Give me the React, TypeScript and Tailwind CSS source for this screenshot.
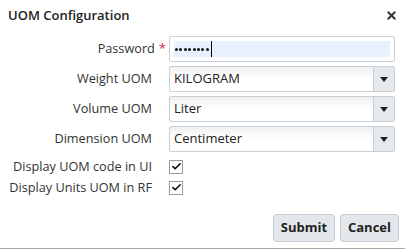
import { Check, X } from 'lucide-react';

const font = { fontFamily: '"Open Sans", "Noto Sans", sans-serif' };

function SelectBox({ value }: { value: string }) {
  return (
    <div className="h-[26px] w-[226px] flex border border-[#c8d0d7] rounded-[2px] bg-gradient-to-b from-[#f0f0f0] via-white to-white">
      <div className="flex-1 flex items-center pl-[4px] text-[13px] text-[#222]">{value}</div>
      <div className="w-[21px] flex items-center justify-center border-l border-[#c8d0d7] bg-[#e5e9ec]">
        <svg width="8" height="5" viewBox="0 0 8 5">
          <path d="M0 0 L8 0 L4 5 Z" fill="#222" />
        </svg>
      </div>
    </div>
  );
}

function CheckBox() {
  return (
    <div className="w-[14px] h-[14px] border border-[#9a9a9a] bg-white flex items-center justify-center">
      <Check size={11} strokeWidth={3.2} className="text-black" />
    </div>
  );
}

export default function App() {
  const dots = [0, 1, 2, 3, 4, 5, 6, 7];
  return (
    <div style={font} className="w-[405px] h-[249px] bg-white border-b border-[#a8a8a8] text-[#333] flex flex-col">
      <div className="h-[30px] flex items-center justify-between pl-[8px] pr-[7px]">
        <h1 className="text-[13px] font-semibold text-[#222] pt-[1px]">UOM Configuration</h1>
        <X size={13} strokeWidth={3.5} className="text-[#333]" />
      </div>

      <div className="grid grid-cols-[169px_226px] gap-y-[4px] mt-[6px] text-[12.7px]">
        <div className="flex items-center justify-end pr-[3px]">
          <span>Password</span>
          <span className="text-[#e0245e] ml-[4px] text-[13px]">*</span>
        </div>
        <div className="h-[26px] border border-[#c8d0d7] rounded-[2px] bg-white p-[4px]">
          <div className="h-full bg-[#e8f0fe] flex items-center pl-[1px] gap-[1.4px]">
            {dots.map((d) => (
              <span key={d} className="w-[3px] h-[3px] rounded-full bg-[#111]" />
            ))}
            <span className="w-[1px] h-[16px] bg-black ml-[1px]" />
          </div>
        </div>

        <div className="flex items-center justify-end pr-[17px]">Weight UOM</div>
        <SelectBox value="KILOGRAM" />

        <div className="flex items-center justify-end pr-[17px]">Volume UOM</div>
        <SelectBox value="Liter" />

        <div className="flex items-center justify-end pr-[17px]">Dimension UOM</div>
        <SelectBox value="Centimeter" />
      </div>

      <div className="grid grid-cols-[169px_226px] mt-[4px] text-[12.7px]">
        <div className="h-[21px] flex items-center justify-end pr-[17px]">Display UOM code in UI</div>
        <div className="flex items-center"><CheckBox /></div>
        <div className="h-[21px] flex items-center justify-end pr-[17px]">Display Units UOM in RF</div>
        <div className="flex items-center"><CheckBox /></div>
      </div>

      <div className="flex justify-end gap-[5px] pr-[6px] mt-[16px]">
        <button className="h-[28px] w-[62px] rounded-[3px] border border-[#c4ced7] bg-[#e4e8ec] text-[13px] font-bold text-[#222]">Submit</button>
        <button className="h-[28px] w-[59px] rounded-[3px] border border-[#c4ced7] bg-[#e4e8ec] text-[13px] font-bold text-[#222]">Cancel</button>
      </div>
    </div>
  );
}
